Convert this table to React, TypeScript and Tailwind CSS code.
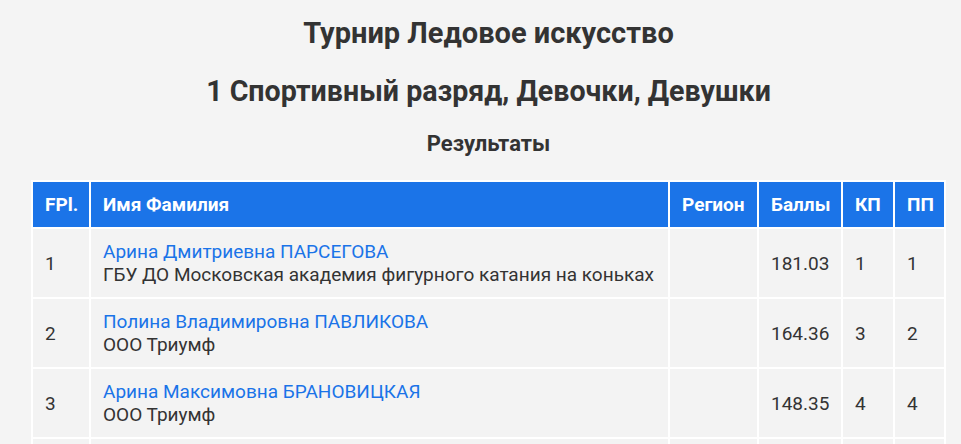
const rows = [
  {
    place: '1',
    name: 'Арина Дмитриевна ПАРСЕГОВА',
    club: 'ГБУ ДО Московская академия фигурного катания на коньках',
    points: '181.03',
    sp: '1',
    fs: '1',
  },
  {
    place: '2',
    name: 'Полина Владимировна ПАВЛИКОВА',
    club: 'ООО Триумф',
    points: '164.36',
    sp: '3',
    fs: '2',
  },
  {
    place: '3',
    name: 'Арина Максимовна БРАНОВИЦКАЯ',
    club: 'ООО Триумф',
    points: '148.35',
    sp: '4',
    fs: '4',
  },
  {
    place: '4',
    name: 'Виктория Андреевна СОКОЛОВА',
    club: 'ООО Триумф',
    points: '140.12',
    sp: '2',
    fs: '5',
  },
]

const th = 'border-2 border-white px-3 py-[11px] text-left font-bold'
const td = 'border-2 border-white px-3 py-[11px] align-middle'

export default function App() {
  return (
    <div className="min-h-screen bg-[#f4f4f4] font-['Roboto',sans-serif] text-[#333]">
      <div className="pl-4 pt-[13px] text-center">
        <h1 className="text-[29px] font-bold leading-[40px]">
          Турнир Ледовое искусство
        </h1>
        <h2 className="mt-[18px] text-[28.6px] font-bold leading-[40px]">
          1 Спортивный разряд, Девочки, Девушки
        </h2>
        <h3 className="mt-[18px] text-[22px] font-bold leading-[30px]">
          Результаты
        </h3>
      </div>

      <div className="px-[31px] pt-[21px]">
        <table className="w-[915px] table-fixed border-collapse text-[19px] leading-[23px]">
          <colgroup>
            <col className="w-[58px]" />
            <col />
            <col className="w-[89px]" />
            <col className="w-[84px]" />
            <col className="w-[52px]" />
            <col className="w-[51px]" />
          </colgroup>
          <thead>
            <tr className="bg-[#1b74e8] text-white">
              <th className={th}>FPl.</th>
              <th className={th}>Имя Фамилия</th>
              <th className={th}>Регион</th>
              <th className={th}>Баллы</th>
              <th className={th}>КП</th>
              <th className={th}>ПП</th>
            </tr>
          </thead>
          <tbody>
            {rows.map(function renderRow(row) {
              return (
                <tr key={row.place} className="bg-[#f3f3f3]">
                  <td className={td}>{row.place}</td>
                  <td className={td}>
                    <a href="#" className="block text-[#1a73e8]">
                      {row.name}
                    </a>
                    <div>{row.club}</div>
                  </td>
                  <td className={td}></td>
                  <td className={td}>{row.points}</td>
                  <td className={td}>{row.sp}</td>
                  <td className={td}>{row.fs}</td>
                </tr>
              )
            })}
          </tbody>
        </table>
      </div>
    </div>
  )
}
